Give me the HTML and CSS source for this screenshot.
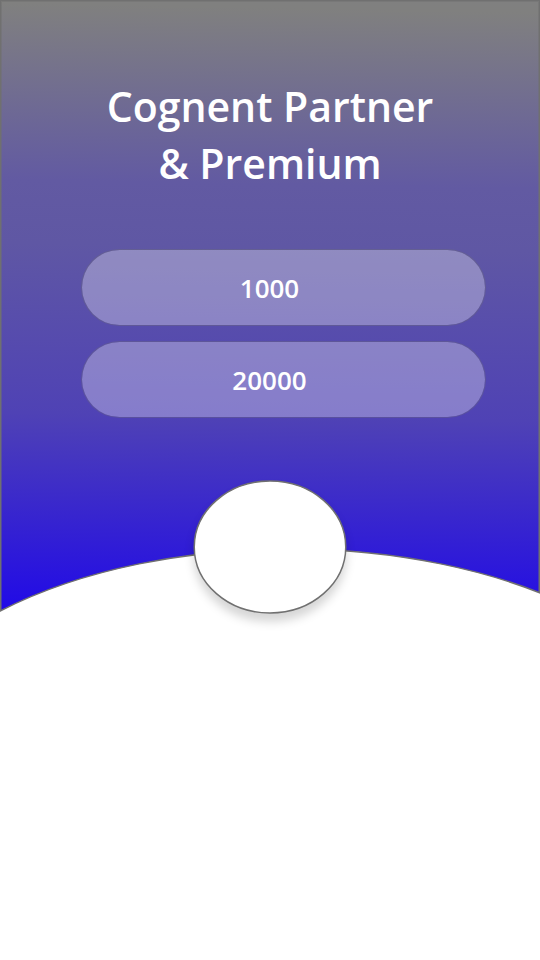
FILE: index.html
```html
<!DOCTYPE html>
<html lang="en">
<head>
<meta charset="utf-8">
<meta name="viewport" content="width=device-width, initial-scale=1">
<title>Cognent Partner &amp; Premium</title>
<link rel="stylesheet" href="styles.css">
</head>
<body>
<main class="page">
  <section class="hero">
    <h1 class="title">Cognent Partner<br>&amp; Premium</h1>
    <div class="options">
      <button class="option" type="button">1000</button>
      <button class="option" type="button">20000</button>
    </div>
    <div class="footer">
      <svg class="curve" viewBox="0 0 540 72" preserveAspectRatio="none" aria-hidden="true">
        <ellipse cx="290" cy="213" rx="410" ry="212"/>
      </svg>
      <svg class="avatar" viewBox="0 0 154 134" aria-hidden="true">
        <ellipse cx="77" cy="67" rx="75.75" ry="66"/>
      </svg>
    </div>
  </section>
</main>
</body>
</html>
```
FILE: styles.css
```css
* {
  box-sizing: border-box;
}

body {
  margin: 0;
  background: #fff;
  color: #fff;
  font-family: "Open Sans", "Noto Sans", sans-serif;
  font-weight: 600;
}

.page {
  min-height: 100vh;
}

.hero {
  display: flex;
  flex-direction: column;
  padding-top: 78px;
  background: linear-gradient(181deg, #808080 0%, #80807f 2%, #625aa2 30%, #5f57a4 40%, #4f42b5 67%, #2009e8 99%);
  box-shadow: inset 0 0 0 1px #707070, inset 0 0 0 2px rgba(112, 112, 112, 0.5);
}

.title {
  margin: 0;
  font-size: 41px;
  font-weight: 600;
  line-height: 57px;
  text-align: center;
}

.options {
  display: grid;
  gap: 15px;
  margin-top: 57px;
  padding: 0 10% 0 15%;
}

.option {
  height: 77px;
  padding: 0 28px 0 0;
  border: 1px solid rgba(112, 112, 112, 0.32);
  border-radius: 39px;
  background: rgba(255, 255, 255, 0.31);
  background-clip: padding-box;
  color: inherit;
  font: inherit;
  font-size: 26px;
  text-align: center;
}

.footer {
  position: relative;
  display: grid;
  margin-top: 130px;
}

.curve {
  display: block;
  width: 100%;
  height: 72px;
}

.curve ellipse,
.avatar ellipse {
  fill: #fff;
  stroke: #707070;
  stroke-width: 1.5;
}

.avatar {
  position: absolute;
  top: -68px;
  left: 50%;
  width: 154px;
  height: 134px;
  margin-left: -77px;
  overflow: visible;
  filter: drop-shadow(0 8px 5px rgba(0, 0, 0, 0.16));
}
```
